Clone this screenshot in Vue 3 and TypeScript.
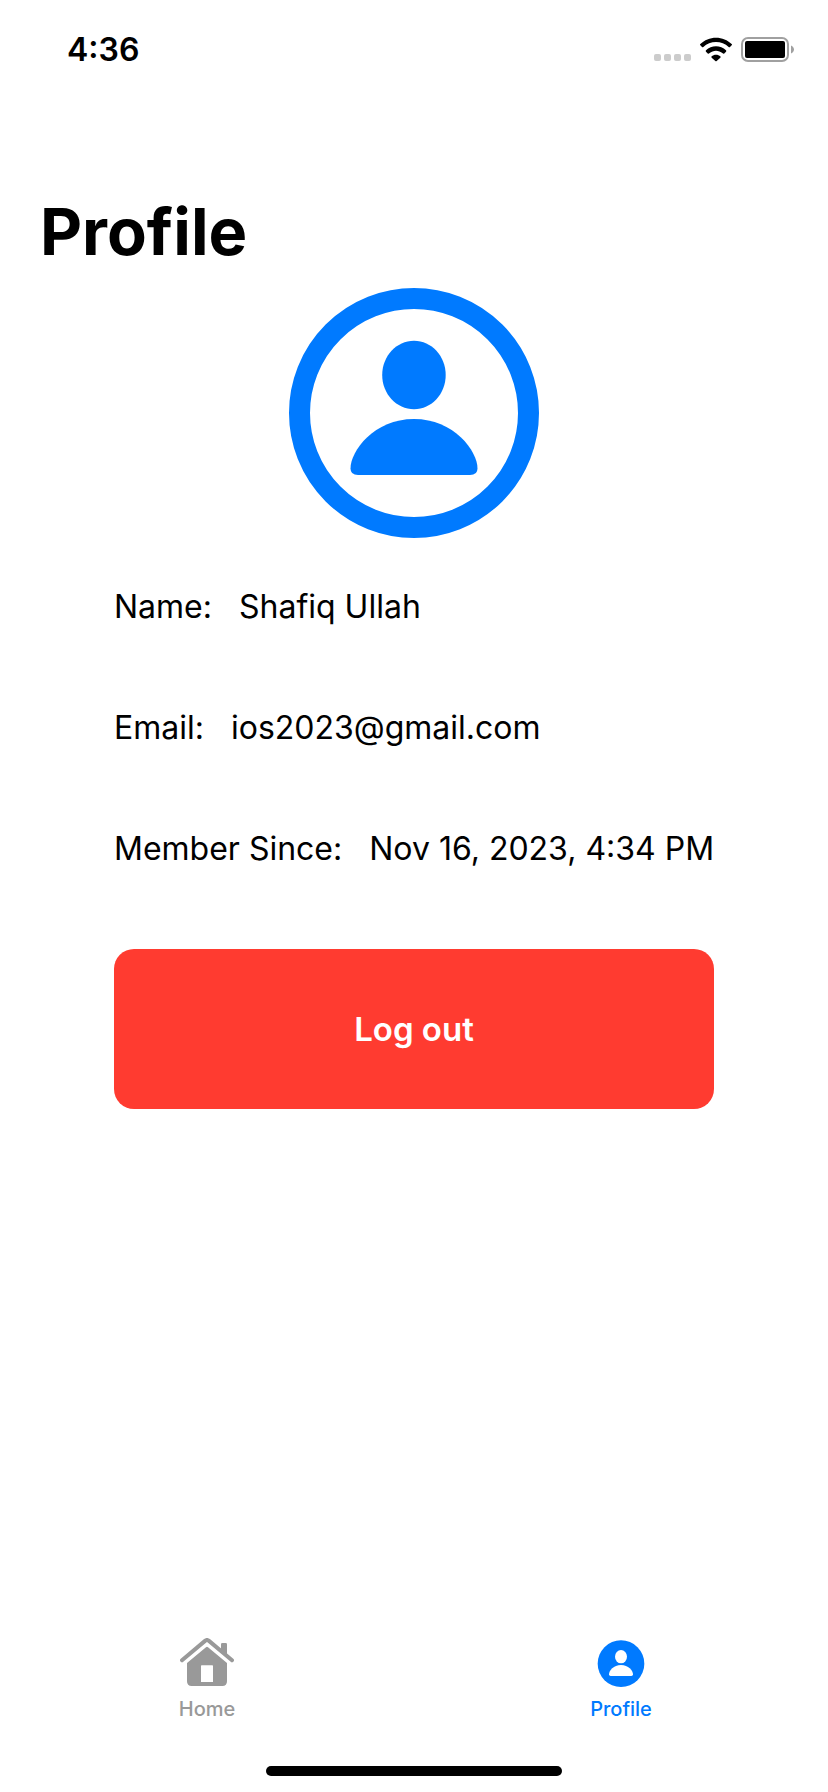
<script setup lang="ts">
import { ref } from 'vue'

type Tab = 'home' | 'profile'

interface Field {
  label: string
  value: string
}

const activeTab = ref<Tab>('profile')

const fields: Field[] = [
  { label: 'Name:', value: 'Shafiq Ullah' },
  { label: 'Email:', value: 'ios2023@gmail.com' },
  { label: 'Member Since:', value: 'Nov 16, 2023, 4:34 PM' },
]
</script>

<template>
  <div class="screen">
    <header class="status">
      <time class="clock">4:36</time>
      <div class="indicators">
        <svg class="signal" viewBox="0 0 37 25" aria-hidden="true">
          <rect x="0" y="17" width="7" height="7" rx="2" />
          <rect x="10" y="17" width="7" height="7" rx="2" />
          <rect x="20" y="17" width="7" height="7" rx="2" />
          <rect x="30" y="17" width="7" height="7" rx="2" />
        </svg>
        <svg class="wifi" viewBox="0 0 96 75" aria-hidden="true">
          <path d="M48 2C66 2 83 9 95 21Q97 23 95 25L90 30Q88 32 86 30C76 20 62 15 48 15S20 20 10 30Q8 32 6 30L1 25Q-1 23 1 21C13 9 30 2 48 2Z" />
          <path d="M48 28C59 28 70 32 78 40Q80 42 78 44L72 50Q70 51 68 49C62 44 55 41 48 41S34 44 28 49Q26 51 24 50L18 44Q16 42 18 40C26 32 37 28 48 28Z" />
          <path d="M48 53C53 53 58 55 61 58Q63 60 61 62L50 72Q48 74 46 72L35 62Q33 60 35 58C38 55 43 53 48 53Z" />
        </svg>
        <svg class="battery" viewBox="0 0 53 25" aria-hidden="true">
          <rect class="battery-shell" x="1" y="1" width="46" height="23" rx="6" />
          <rect x="4" y="4" width="40" height="17" rx="2" />
          <path class="battery-cap" d="M50 8.500C54 10.500 54 14.500 50 16.500Z" />
        </svg>
      </div>
    </header>

    <main class="content">
      <h1 class="title">Profile</h1>

      <svg class="avatar" viewBox="0 0 250 250" role="img" aria-label="Profile picture">
        <circle class="avatar-ring" cx="125" cy="125" r="114.500" />
        <path d="M125 52.700C142.500 52.700 156.700 68 156.700 87S142.500 121.200 125 121.200 93.200 106 93.200 87 107.500 52.700 125 52.700Z" />
        <path d="M125 131C165 131 188.500 163 188.500 180.500Q188.500 187 181 187H69Q61.500 187 61.500 180.500C61.500 163 85 131 125 131Z" />
      </svg>

      <section class="details">
        <dl class="fields">
          <div v-for="field in fields" :key="field.label" class="field">
            <dt>{{ field.label }}</dt>
            <dd>{{ field.value }}</dd>
          </div>
        </dl>
        <button class="logout" type="button">Log out</button>
      </section>
    </main>

    <nav class="tabs">
      <a
        class="tab"
        :class="{ active: activeTab === 'home' }"
        href="#home"
        @click.prevent="activeTab = 'home'"
      >
        <svg class="tab-icon" viewBox="0 0 162 147" aria-hidden="true">
          <path class="roof" d="M6 67L76 8Q81 4 86 8L156 67" />
          <path d="M123 19Q123 15 127 15H137Q141 15 141 19V51L123 36Z" />
          <path
            fill-rule="evenodd"
            d="M78 28Q81 25 84 28L141 75V130Q141 144 127 144H35Q21 144 21 130V75ZM65 82Q63 82 63 84V132H99V84Q99 82 97 82Z"
          />
        </svg>
        <span>Home</span>
      </a>
      <a
        class="tab"
        :class="{ active: activeTab === 'profile' }"
        href="#profile"
        @click.prevent="activeTab = 'profile'"
      >
        <svg class="tab-icon" viewBox="0 0 162 147" aria-hidden="true">
          <circle cx="81" cy="77" r="70" />
          <ellipse class="cutout" cx="81" cy="56" rx="18" ry="20" />
          <path class="cutout" d="M81 81C103 81 117 98 117 109Q117 114 112 114H50Q45 114 45 109C45 98 59 81 81 81Z" />
        </svg>
        <span>Profile</span>
      </a>
    </nav>
    <div class="home-indicator"></div>
  </div>
</template>

<style>
body {
  margin: 0;
  background: #fff;
}
</style>

<style scoped>
.screen {
  box-sizing: border-box;
  min-height: 100vh;
  display: flex;
  flex-direction: column;
  padding-bottom: 16px;
  background: #fff;
  color: #000;
  font-family: Inter, "Liberation Sans", sans-serif;
  font-size: 32px;
  line-height: 41px;
}

.status {
  display: flex;
  align-items: center;
  justify-content: space-between;
  height: 98px;
  padding: 0 34px 0 67px;
}

.clock {
  font-size: 32px;
  font-weight: 600;
}

.indicators {
  display: flex;
  align-items: center;
  gap: 9px;
}

.signal {
  width: 37px;
  height: 25px;
  fill: #ccc;
}

.wifi {
  width: 32px;
  height: 25px;
}

.battery {
  width: 53px;
  height: 25px;
}

.battery-shell {
  fill: none;
  stroke: #a0a0a0;
  stroke-width: 2;
}

.battery-cap {
  fill: #a0a0a0;
}

.content {
  flex: 1;
  display: flex;
  flex-direction: column;
  align-items: center;
  padding-top: 94px;
}

.title {
  align-self: flex-start;
  margin: 0;
  padding: 0 40px 16px;
  font-size: 65px;
  font-weight: 700;
  line-height: 80px;
}

.avatar {
  width: 250px;
  height: 250px;
  fill: #007aff;
}

.avatar-ring {
  fill: none;
  stroke: #007aff;
  stroke-width: 21;
}

.details {
  box-sizing: border-box;
  width: 100%;
  max-width: 632px;
  padding: 8px 16px;
}

.fields {
  margin: 0 0 40px;
}

.field {
  display: flex;
  gap: 27px;
  padding: 40px 0;
  white-space: nowrap;
}

.field dd {
  margin: 0;
}

.logout {
  width: 100%;
  height: 160px;
  border: 0;
  border-radius: 20px;
  background: #ff3b30;
  color: #fff;
  font: inherit;
  font-size: 33px;
  font-weight: 600;
}

.tabs {
  display: flex;
  padding-bottom: 45px;
}

.tab {
  flex: 1;
  display: flex;
  flex-direction: column;
  align-items: center;
  gap: 10px;
  color: #999;
  font-size: 20px;
  font-weight: 500;
  line-height: 24px;
  text-decoration: none;
}

.tab.active {
  color: #007aff;
}

.tab-icon {
  width: 54px;
  height: 49px;
  fill: currentColor;
}

.roof {
  fill: none;
  stroke: currentColor;
  stroke-width: 12;
  stroke-linecap: round;
}

.cutout {
  fill: #fff;
}

.home-indicator {
  width: 296px;
  height: 10px;
  align-self: center;
  border-radius: 5px;
  background: #000;
}
</style>
